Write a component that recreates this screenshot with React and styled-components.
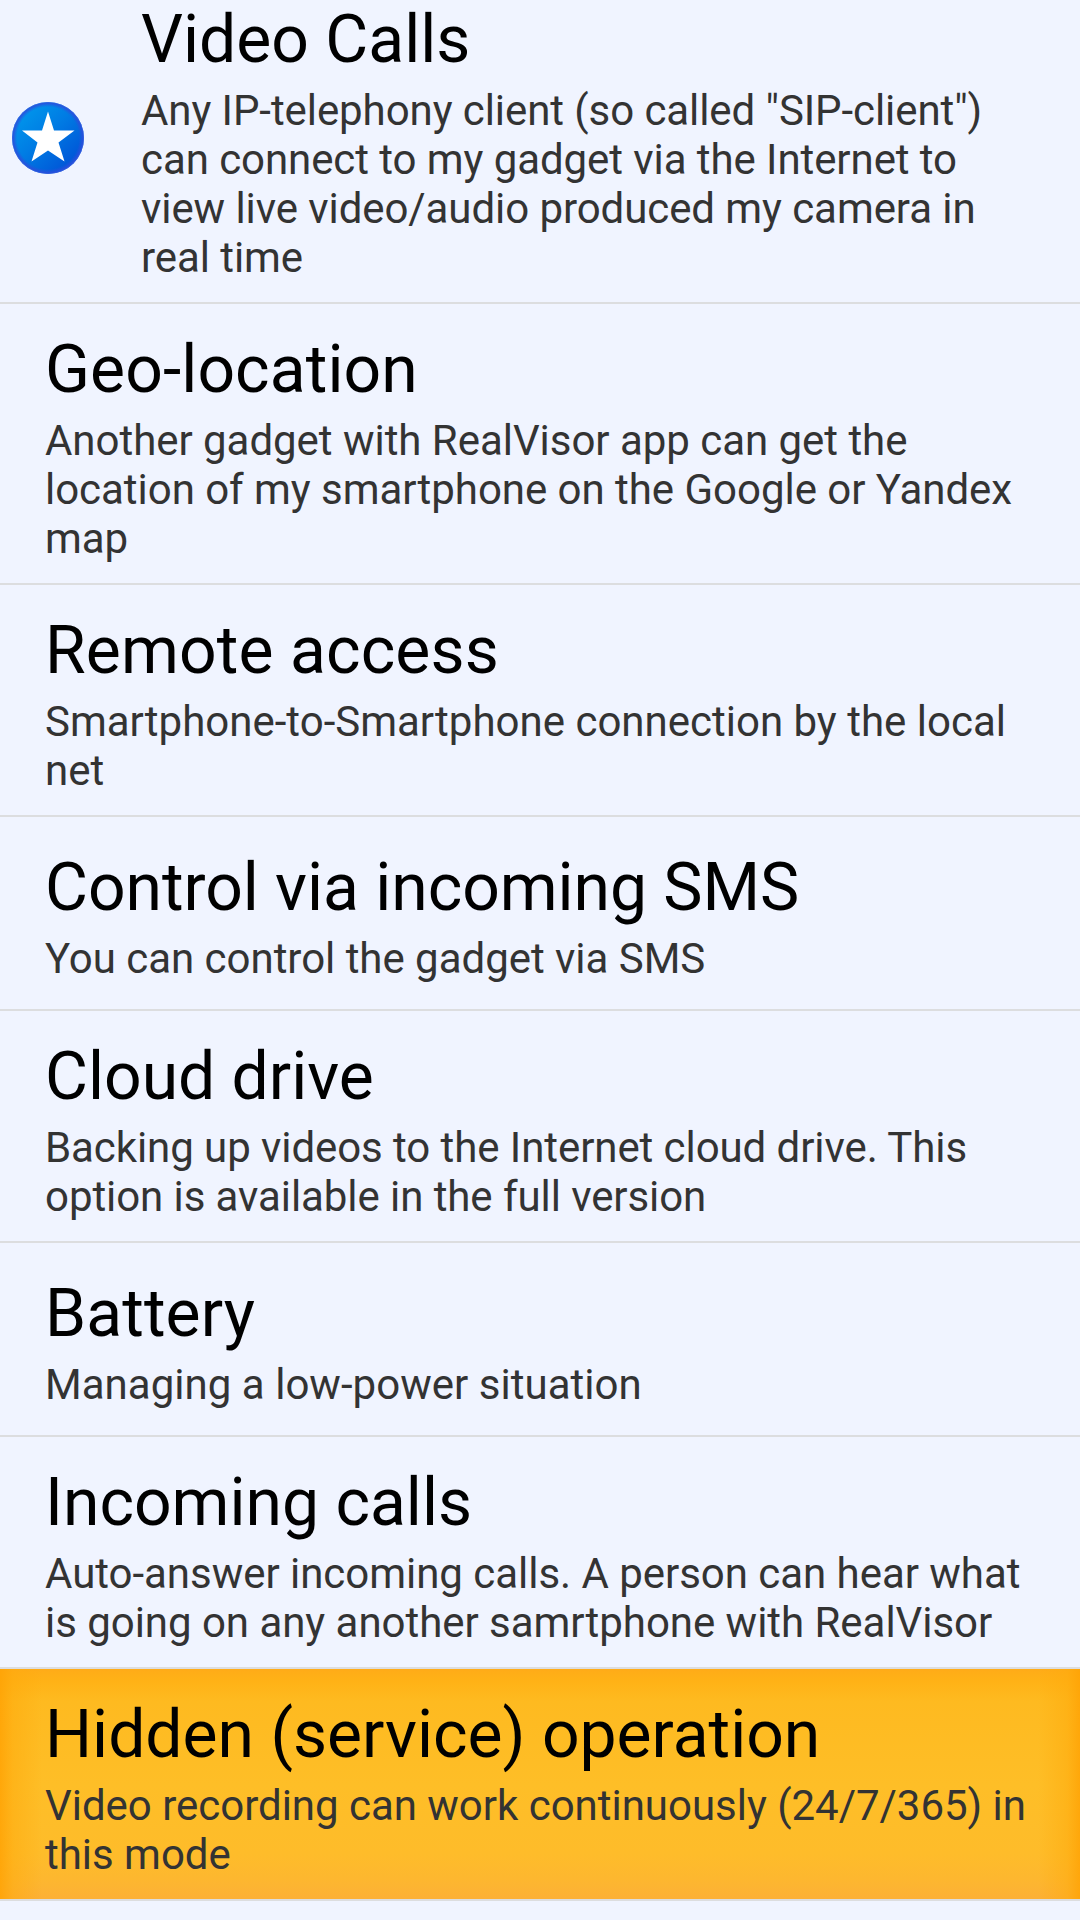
import React from 'react'
import styled, { createGlobalStyle } from 'styled-components'

const GlobalStyle = createGlobalStyle`
  body {
    margin: 0;
    background: #f0f4ff;
    font-family: Roboto, sans-serif;
  }
`

const Screen = styled.div`
  display: flex;
  flex-direction: column;
  justify-content: flex-start;
  width: 1080px;
  height: 1920px;
  overflow: hidden;
  background: #f0f4ff;
`

const Row = styled.div`
  display: flex;
  flex-shrink: 0;
  align-items: center;
  box-sizing: border-box;
  height: ${(props) => props.$height}px;
  margin-top: ${(props) => (props.$scrolled ? -props.$scrolled : 0)}px;
  padding-left: ${(props) => (props.$icon ? 11 : 45)}px;
  border-bottom: 2px solid #dcdddf;
  background: ${(props) => (props.$active
    ? `linear-gradient(90deg, rgba(255, 163, 5, 0.85) 0, rgba(255, 170, 12, 0.5) 13px, rgba(255, 180, 25, 0) 42px, rgba(255, 180, 25, 0) 1038px, rgba(255, 170, 12, 0.5) 1067px, rgba(255, 163, 5, 0.85) 100%),
       linear-gradient(180deg, #ffab18 0, #ffb216 12px, #feba20 32px, #febe27 115px, #febc2a 185px, #fdb72f 210px, #fcb036 100%)`
    : 'transparent')};
  background-clip: padding-box;
`

const IconBox = styled.div`
  display: flex;
  width: 130px;
`

const Texts = styled.div`
  padding-top: ${(props) => props.$top}px;
`

const Title = styled.div`
  margin-bottom: 7px;
  font-size: 66px;
  line-height: 78px;
  letter-spacing: ${(props) => props.$spacing || 0}px;
  color: #000;
  white-space: nowrap;
`

const Summary = styled.div`
  font-size: 42px;
  line-height: 49px;
  letter-spacing: ${(props) => props.$spacing || 0}px;
  color: #333;
  white-space: pre;
`

const rows = [
  { title: 'Video Calls', height: 331, scrolled: 27, icon: true, spacing: -0.075, text: 'Any IP-telephony client (so called "SIP-client")\ncan connect to my gadget via the Internet to\nview live video/audio produced my camera in\nreal time' },
  { title: 'Geo-location', height: 281, titleSpacing: 0.1, spacing: -0.035, text: 'Another gadget with RealVisor app can get the\nlocation of my smartphone on the Google or Yandex\nmap' },
  { title: 'Remote access', height: 232, titleSpacing: 0.12, text: 'Smartphone-to-Smartphone connection by the local\nnet' },
  { title: 'Control via incoming SMS', height: 194, top: 5, titleSpacing: -0.04, spacing: -0.03, text: 'You can control the gadget via SMS' },
  { title: 'Cloud drive', height: 232, spacing: -0.075, text: 'Backing up videos to the Internet cloud drive. This\noption is available in the full version' },
  { title: 'Battery', height: 194, top: 5, titleSpacing: 0.1, spacing: 0.03, text: 'Managing a low-power situation' },
  { title: 'Incoming calls', height: 232, spacing: -0.035, text: 'Auto-answer incoming calls. A person can hear what\nis going on any another samrtphone with RealVisor' },
  { title: 'Hidden (service) operation', height: 232, active: true, spacing: -0.02, text: 'Video recording can work continuously (24/7/365) in\nthis mode' },
]

function StarIcon() {
  return (
    <svg width="74" height="74" viewBox="0 0 74 74">
      <defs>
        <linearGradient id="ball" x1="0.1" y1="0.1" x2="0.85" y2="0.9">
          <stop offset="0" stopColor="#0098ec" />
          <stop offset="0.45" stopColor="#007de4" />
          <stop offset="1" stopColor="#0052d6" />
        </linearGradient>
        <radialGradient id="rim">
          <stop offset="0.86" stopColor="#2b4fdc" stopOpacity="0" />
          <stop offset="0.97" stopColor="#2b4fdc" stopOpacity="0.9" />
          <stop offset="1" stopColor="#4968e2" stopOpacity="0.9" />
        </radialGradient>
      </defs>
      <circle cx="37" cy="37" r="36" fill="url(#ball)" />
      <circle cx="37" cy="37" r="36" fill="url(#rim)" />
      <path d="M37 10.5L43 29.5H63.5L47.5 41.5L53.5 60.5L37 49.5L20.5 60.5L26.5 41.5L11 29.5H31z" fill="#fff" />
    </svg>
  )
}

function App() {
  return (
    <Screen>
      <GlobalStyle />
      {rows.map((row) => (
        <Row key={row.title} $height={row.height} $scrolled={row.scrolled} $icon={row.icon} $active={row.active}>
          {row.icon && <IconBox><StarIcon /></IconBox>}
          <Texts $top={row.top ?? 7}>
            <Title $spacing={row.titleSpacing}>{row.title}</Title>
            <Summary $spacing={row.spacing}>{row.text}</Summary>
          </Texts>
        </Row>
      ))}
    </Screen>
  )
}

export default App
